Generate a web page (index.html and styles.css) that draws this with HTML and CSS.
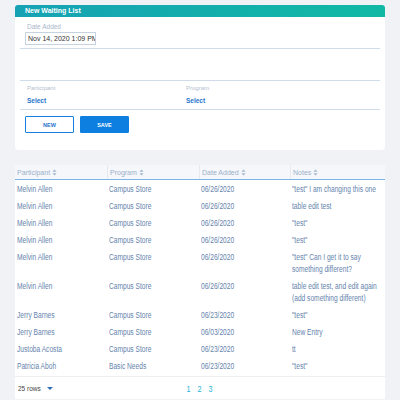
FILE: index.html
```html
<!DOCTYPE html>
<html>
<head>
<meta charset="utf-8">
<link rel="stylesheet" href="styles.css">
</head>
<body>
<div class="page">
  <section class="card form-card">
    <div class="card-head">New Waiting List</div>
    <div class="form-body">
      <div class="field">
        <label class="lbl">Date Added</label>
        <div class="date-input">Nov 14, 2020 1:09 PM</div>
      </div>
      <div class="spacer"></div>
      <div class="select-row">
        <div class="sel">
          <div class="lbl">Participant</div>
          <div class="sel-val">Select</div>
        </div>
        <div class="sel">
          <div class="lbl">Program</div>
          <div class="sel-val">Select</div>
        </div>
      </div>
      <div class="btns">
        <button class="btn btn-new">NEW</button>
        <button class="btn btn-save">SAVE</button>
      </div>
    </div>
  </section>

  <section class="card table-card">
    <div class="thead">
      <div class="th">Participant <svg class="sort" viewBox="0 0 6 8"><path d="M3 0.5 L5.5 3 H0.5 Z M3 7.5 L5.5 5 H0.5 Z"/></svg></div>
      <div class="th">Program <svg class="sort" viewBox="0 0 6 8"><path d="M3 0.5 L5.5 3 H0.5 Z M3 7.5 L5.5 5 H0.5 Z"/></svg></div>
      <div class="th">Date Added <svg class="sort" viewBox="0 0 6 8"><path d="M3 0.5 L5.5 3 H0.5 Z M3 7.5 L5.5 5 H0.5 Z"/></svg></div>
      <div class="th">Notes <svg class="sort" viewBox="0 0 6 8"><path d="M3 0.5 L5.5 3 H0.5 Z M3 7.5 L5.5 5 H0.5 Z"/></svg></div>
    </div>
    <div class="tbody">
      <div class="tr"><div><span>Melvin Allen</span></div><div><span>Campus Store</span></div><div><span>06/26/2020</span></div><div><span>"test" I am changing this one</span></div></div>
      <div class="tr"><div><span>Melvin Allen</span></div><div><span>Campus Store</span></div><div><span>06/26/2020</span></div><div><span>table edit test</span></div></div>
      <div class="tr"><div><span>Melvin Allen</span></div><div><span>Campus Store</span></div><div><span>06/26/2020</span></div><div><span>"test"</span></div></div>
      <div class="tr"><div><span>Melvin Allen</span></div><div><span>Campus Store</span></div><div><span>06/26/2020</span></div><div><span>"test"</span></div></div>
      <div class="tr"><div><span>Melvin Allen</span></div><div><span>Campus Store</span></div><div><span>06/26/2020</span></div><div><span>"test" Can I get it to say something different?</span></div></div>
      <div class="tr"><div><span>Melvin Allen</span></div><div><span>Campus Store</span></div><div><span>06/26/2020</span></div><div><span>table edit test, and edit again (add something different)</span></div></div>
      <div class="tr"><div><span>Jerry Barnes</span></div><div><span>Campus Store</span></div><div><span>06/23/2020</span></div><div><span>"test"</span></div></div>
      <div class="tr"><div><span>Jerry Barnes</span></div><div><span>Campus Store</span></div><div><span>06/03/2020</span></div><div><span>New Entry</span></div></div>
      <div class="tr"><div><span>Justoba Acosta</span></div><div><span>Campus Store</span></div><div><span>06/23/2020</span></div><div><span>tt</span></div></div>
      <div class="tr"><div><span>Patricia Aboh</span></div><div><span>Basic Needs</span></div><div><span>06/23/2020</span></div><div><span>"test"</span></div></div>
    </div>
    <div class="tfoot">
      <div class="rows">25 rows <span class="caret"></span></div>
      <div class="pages"><span class="pg cur">1</span><span class="pg">2</span><span class="pg">3</span></div>
    </div>
  </section>
</div>
</body>
</html>
```
FILE: styles.css
```css
* { box-sizing: border-box; margin: 0; padding: 0; }
html, body { background: #f1f2f6; }
body { width: 400px; height: 400px; overflow: hidden; font-family: "Liberation Sans", Arial, sans-serif; }
.page { padding: 5px 15px 0 15px; display: flex; flex-direction: column; }
.card { background: #fff; }
.form-card { border-radius: 2px 2px 4px 4px; height: 145px; }
.card-head {
  height: 12px;
  background: linear-gradient(90deg, #17a2b4, #10b9a4);
  color: #fff; font-weight: bold; font-size: 7px; line-height: 12px;
  padding-left: 10px; border-radius: 3px 3px 0 0;
}
.form-body { padding: 0 5px; }
.lbl { display: block; font-size: 6.5px; color: #a9b7ca; line-height: 8px; }
.field { padding: 6px 0 0 7px; height: 32px; border-bottom: 1px solid #cfdbe8; }
.date-input {
  margin-left: -2px; margin-top: 1px;
  width: 71px; height: 13px; border: 1px solid #c4d2e2;
  font-size: 7px; color: #333; line-height: 11px; padding-left: 2px;
  white-space: nowrap; overflow: hidden;
}
.spacer { height: 32px; border-bottom: 1px solid #cfdbe8; }
.select-row { display: flex; height: 29px; border-bottom: 1px solid #cfdbe8; }
.sel { width: 159px; padding: 3px 0 0 7px; }
.sel + .sel { padding-left: 7px; }
.sel .lbl { font-size: 6px; color: #b4c0d0; }
.sel-val { font-size: 6.5px; color: #1f74cc; margin-top: 5px; font-weight: bold; line-height: 8px; }
.btns { display: flex; gap: 6px; padding: 6px 0 0 5px; }
.btn {
  width: 49px; height: 17px; font-size: 5.5px; font-weight: bold;
  font-family: "Liberation Sans", Arial, sans-serif; border-radius: 1px;
}
.btn-new { background: #fff; border: 1px solid #1681e0; color: #1f74cc; }
.btn-save { background: #0d7fe0; border: 1px solid #0d7fe0; color: #fff; }

.table-card { margin-top: 15px; width: 370px; background: #fff; }
.thead {
  display: grid; grid-template-columns: 92px 92px 91px 1fr;
  height: 15px; background: #f6f7fa; border-bottom: 1px solid #7db4ea;
}
.th {
  font-size: 7px; color: #9ab0cb; padding: 3px 0 0 2px;
  font-family: "Liberation Sans", Arial, sans-serif;
  display: flex; align-items: center; gap: 2px; height: 14px; padding-top: 0;
}
.th + .th { border-left: 1px solid #e6eaf0; }
.sort { width: 5px; height: 7px; fill: #a3b6cf; }
.tbody { padding-bottom: 2px; border-bottom: 1px solid #eceef2; }
.tr {
  display: grid; grid-template-columns: 92px 92px 91px 1fr;
  font-family: "Liberation Sans", Arial, sans-serif;
  font-size: 8.5px; color: #6583ad; line-height: 12px;
  padding: 2.5px 0;
}
.tr > div { padding-left: 2px; }
.tr span {
  display: inline-block; width: 128%;
  transform: scaleX(0.78); transform-origin: 0 0;
}
.tfoot {
  margin-top: 1px; height: 21px;
  display: flex; align-items: center; position: relative;
}
.rows { font-size: 6.5px; color: #444; padding-left: 3px; display: flex; align-items: center; gap: 6px; }
.caret { width: 0; height: 0; border-left: 3px solid transparent; border-right: 3px solid transparent; border-top: 3px solid #2c6fba; }
.pages { position: absolute; left: 171px; display: flex; gap: 6px; font-size: 9px; color: #1cb5d8; }
.pg { display: inline-block; transform: scaleX(0.8); }
```
